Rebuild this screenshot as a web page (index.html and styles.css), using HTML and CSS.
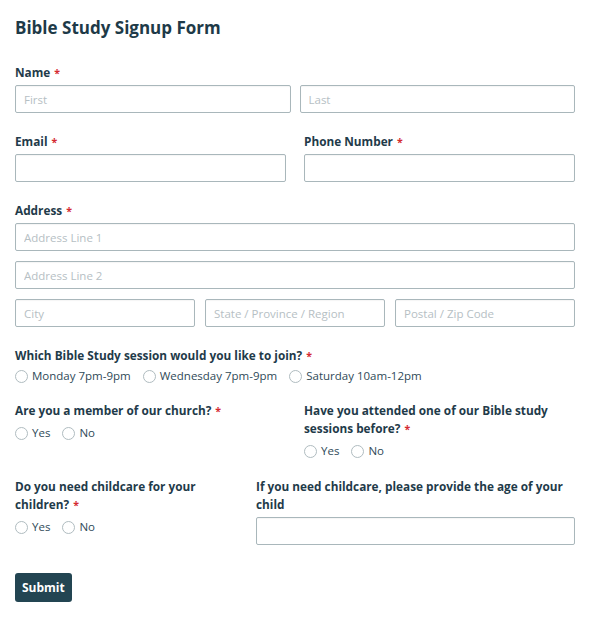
FILE: index.html
```html
<!DOCTYPE html>
<html>
<head>
<meta charset="utf-8">
<link rel="stylesheet" href="styles.css">
</head>
<body>
<form class="form">
  <h1 class="title">Bible Study Signup Form</h1>

  <div class="field">
    <div class="label">Name<span class="req">*</span></div>
    <div class="row row-name">
      <input class="input" type="text" placeholder="First">
      <input class="input" type="text" placeholder="Last">
    </div>
  </div>

  <div class="row row-half field">
    <div>
      <div class="label">Email<span class="req">*</span></div>
      <input class="input" type="text">
    </div>
    <div>
      <div class="label">Phone Number<span class="req">*</span></div>
      <input class="input" type="text">
    </div>
  </div>

  <div class="field">
    <div class="label">Address<span class="req">*</span></div>
    <div class="stack">
      <input class="input" type="text" placeholder="Address Line 1">
      <input class="input" type="text" placeholder="Address Line 2">
      <div class="row row-three">
        <input class="input" type="text" placeholder="City">
        <input class="input" type="text" placeholder="State / Province / Region">
        <input class="input" type="text" placeholder="Postal / Zip Code">
      </div>
    </div>
  </div>

  <div class="field field-radio">
    <div class="label">Which Bible Study session would you like to join?<span class="req">*</span></div>
    <div class="radios">
      <label class="opt"><input class="radio" type="radio" name="s"> Monday 7pm-9pm</label>
      <label class="opt"><input class="radio" type="radio" name="s"> Wednesday 7pm-9pm</label>
      <label class="opt"><input class="radio" type="radio" name="s"> Saturday 10am-12pm</label>
    </div>
  </div>

  <div class="row row-half field field-radio2">
    <div>
      <div class="label">Are you a member of our church?<span class="req">*</span></div>
      <div class="radios">
        <label class="opt"><input class="radio" type="radio" name="m"> Yes</label>
        <label class="opt"><input class="radio" type="radio" name="m"> No</label>
      </div>
    </div>
    <div>
      <div class="label">Have you attended one of our Bible study sessions before?<span class="req">*</span></div>
      <div class="radios">
        <label class="opt"><input class="radio" type="radio" name="a"> Yes</label>
        <label class="opt"><input class="radio" type="radio" name="a"> No</label>
      </div>
    </div>
  </div>

  <div class="row row-child field">
    <div>
      <div class="label">Do you need childcare for your children?<span class="req">*</span></div>
      <div class="radios radios-tight">
        <label class="opt"><input class="radio" type="radio" name="c"> Yes</label>
        <label class="opt"><input class="radio" type="radio" name="c"> No</label>
      </div>
    </div>
    <div>
      <div class="label">If you need childcare, please provide the age of your child</div>
      <input class="input" type="text">
    </div>
  </div>

  <button class="submit" type="button">Submit</button>
</form>
</body>
</html>
```

FILE: styles.css
```css
* { box-sizing: border-box; }
html, body { margin: 0; padding: 0; background: #fff; }
body {
  font-family: "Open Sans", "Noto Sans", sans-serif;
  color: #1f3b4a;
  font-size: 11.8px;
}
.form {
  padding: 15px 15px 20px 15px;
  width: 590px;
}
.title {
  margin: 0 0 22px 0;
  font-size: 17px;
  line-height: 26px;
  font-weight: 700;
  color: #1e3a48;
}
.field { margin-bottom: 19px; }
.label {
  font-weight: 700;
  line-height: 18px;
  margin-bottom: 4px;
  font-size: 11.8px;
}
.req { color: #d42a30; font-size: 10.5px; line-height: 1; margin-left: 4px; }
.row { display: grid; }
.row-name { grid-template-columns: 1fr 1fr; column-gap: 9px; }
.row-half { grid-template-columns: 1fr 1fr; column-gap: 18px; }
.row-three { grid-template-columns: 1fr 1fr 1fr; column-gap: 10px; }
.row-child { grid-template-columns: 225px 1fr; column-gap: 16px; }
.stack { display: flex; flex-direction: column; gap: 10px; }
.input {
  display: block;
  width: 100%;
  height: 28px;
  border: 1px solid #a9b7bb;
  border-radius: 2px;
  padding: 0 8px;
  font-family: inherit;
  font-size: 11.5px;
  color: #1f3b4a;
  background: #fff;
  box-shadow: inset 0 1px 1px rgba(0,0,0,0.04);
}
.input::placeholder { color: #b6c0c4; }
.field-radio .label { margin-bottom: 2px; }
.field-radio { margin-bottom: 15px; }
.field-radio2 { margin-bottom: 16px; }
.radios { display: flex; gap: 12px; height: 20px; align-items: center; margin-top: 3px; }
.field-radio .radios { margin-top: 0; }
.radios-tight { margin-top: 2px; }
.opt {
  display: flex;
  align-items: center;
  gap: 4px;
  font-size: 11.5px;
  line-height: 16px;
  color: #2f4a58;
}
.radio {
  appearance: none;
  -webkit-appearance: none;
  width: 13px;
  height: 13px;
  margin: 0;
  border: 1px solid #b0bcc0;
  border-radius: 50%;
  background: #fff;
}
.submit {
  margin-top: 28px;
  display: block;
  height: 29px;
  padding: 0 7px;
  background: #234552;
  color: #fff;
  border: none;
  border-radius: 3px;
  font-family: inherit;
  font-weight: 700;
  font-size: 12px;
}
```
